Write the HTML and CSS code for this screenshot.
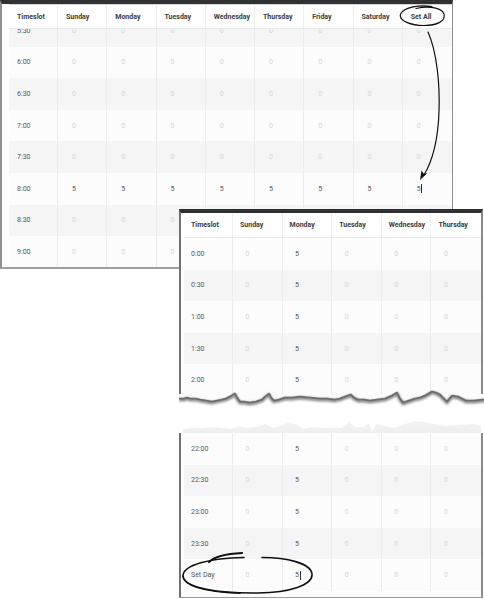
FILE: index.html
```html
<!DOCTYPE html>
<html>
<head>
<meta charset="utf-8">
<link rel="stylesheet" href="styles.css">
</head>
<body>
<div class="canvas">

  <div class="win win1">
    <div class="grid g9 head">
      <div class="hc">Timeslot</div><div class="hc">Sunday</div><div class="hc">Monday</div><div class="hc">Tuesday</div><div class="hc">Wednesday</div><div class="hc">Thursday</div><div class="hc">Friday</div><div class="hc">Saturday</div><div class="hc">Set All</div>
    </div>
    <div class="viewport">
      <div class="scroll">
        <div class="grid g9 row odd"><div class="t">5:30</div><div class="z">0</div><div class="z">0</div><div class="z">0</div><div class="z">0</div><div class="z">0</div><div class="z">0</div><div class="z">0</div><div class="z">0</div></div>
        <div class="grid g9 row"><div class="t">6:00</div><div class="z">0</div><div class="z">0</div><div class="z">0</div><div class="z">0</div><div class="z">0</div><div class="z">0</div><div class="z">0</div><div class="z">0</div></div>
        <div class="grid g9 row odd"><div class="t">6:30</div><div class="z">0</div><div class="z">0</div><div class="z">0</div><div class="z">0</div><div class="z">0</div><div class="z">0</div><div class="z">0</div><div class="z">0</div></div>
        <div class="grid g9 row"><div class="t">7:00</div><div class="z">0</div><div class="z">0</div><div class="z">0</div><div class="z">0</div><div class="z">0</div><div class="z">0</div><div class="z">0</div><div class="z">0</div></div>
        <div class="grid g9 row odd"><div class="t">7:30</div><div class="z">0</div><div class="z">0</div><div class="z">0</div><div class="z">0</div><div class="z">0</div><div class="z">0</div><div class="z">0</div><div class="z">0</div></div>
        <div class="grid g9 row"><div class="t">8:00</div><div class="v">5</div><div class="v">5</div><div class="v">5</div><div class="v">5</div><div class="v">5</div><div class="v">5</div><div class="v">5</div><div class="v">5<span class="caret"></span></div></div>
        <div class="grid g9 row odd"><div class="t">8:30</div><div class="z">0</div><div class="z">0</div><div class="z">0</div><div class="z">0</div><div class="z">0</div><div class="z">0</div><div class="z">0</div><div class="z">0</div></div>
        <div class="grid g9 row"><div class="t">9:00</div><div class="z">0</div><div class="z">0</div><div class="z">0</div><div class="z">0</div><div class="z">0</div><div class="z">0</div><div class="z">0</div><div class="z">0</div></div>
      </div>
    </div>
  </div>

  <div class="win win2">
    <div class="frag frag-top">
      <div class="grid g6 head">
        <div class="hc">Timeslot</div><div class="hc">Sunday</div><div class="hc">Monday</div><div class="hc">Tuesday</div><div class="hc">Wednesday</div><div class="hc">Thursday</div>
      </div>
      <div class="grid g6 row"><div class="t">0:00</div><div class="z">0</div><div class="v">5</div><div class="z">0</div><div class="z">0</div><div class="z">0</div></div>
      <div class="grid g6 row odd"><div class="t">0:30</div><div class="z">0</div><div class="v">5</div><div class="z">0</div><div class="z">0</div><div class="z">0</div></div>
      <div class="grid g6 row"><div class="t">1:00</div><div class="z">0</div><div class="v">5</div><div class="z">0</div><div class="z">0</div><div class="z">0</div></div>
      <div class="grid g6 row odd"><div class="t">1:30</div><div class="z">0</div><div class="v">5</div><div class="z">0</div><div class="z">0</div><div class="z">0</div></div>
      <div class="grid g6 row"><div class="t">2:00</div><div class="z">0</div><div class="v">5</div><div class="z">0</div><div class="z">0</div><div class="z">0</div></div>
      <svg class="tear" width="306" height="24" viewBox="0 0 306 24">
        <defs>
          <clipPath id="below396"><rect x="0" y="10" width="306" height="14"/></clipPath>
          <filter id="blur1" x="-5%" y="-50%" width="110%" height="200%"><feGaussianBlur stdDeviation="1.1"/></filter>
        </defs>
        <polygon clip-path="url(#below396)" fill="#fcfcfc" points="0,0 306,0 306,15 304,15 295,16 287,16 279,12 273,11 268,17 261,10 253,7 246,11 241,13 236,14 230,16 224,18 218,8 213,11 206,14 198,15 191,16 185,15 179,15 172,10 166,12 161,14 156,15 148,14 141,14 131,13 121,12 113,13 106,13 100,15 95,16 90,9 86,12 83,15 77,17 71,18 65,17 61,17 56,9 51,12 47,14 43,15 38,16 33,17 27,16 21,15 16,14 11,14 5,14 0,14"/>
        <polygon fill="#ffffff" points="0,14 5,14 11,14 16,14 21,15 27,16 33,17 38,16 43,15 47,14 51,12 56,9 61,17 65,17 71,18 77,17 83,15 86,12 90,9 95,16 100,15 106,13 113,13 121,12 131,13 141,14 148,14 156,15 161,14 166,12 172,10 179,15 185,15 191,16 198,15 206,14 213,11 218,8 224,18 230,16 236,14 241,13 246,11 253,7 261,10 268,17 273,11 279,12 287,16 295,16 304,15 306,15 306,24 0,24"/>
        <polyline filter="url(#blur1)" fill="none" stroke="#8a8a8a" stroke-width="3.2" stroke-linejoin="round" transform="translate(0,1.8)" points="0,14 5,14 8,13 11,14 16,14 21,15 27,16 33,17 38,16 43,15 47,14 51,12 56,9 58,13 61,17 65,17 71,18 77,17 83,15 86,12 90,9 92,13 95,16 100,15 106,13 113,13 121,12 131,13 141,14 148,14 156,15 161,14 166,12 172,10 175,13 179,15 185,15 191,16 198,15 206,14 213,11 218,8 221,14 224,18 230,16 236,14 241,13 246,11 253,7 257,8 261,10 265,14 268,17 273,11 279,12 283,14 287,16 295,16 304,15 306,15"/>
        <polyline fill="none" stroke="#6c6c6c" stroke-width="1.8" stroke-linejoin="round" transform="translate(0,0.6)" points="0,14 5,14 8,13 11,14 16,14 21,15 27,16 33,17 38,16 43,15 47,14 51,12 56,9 58,13 61,17 65,17 71,18 77,17 83,15 86,12 90,9 92,13 95,16 100,15 106,13 113,13 121,12 131,13 141,14 148,14 156,15 161,14 166,12 172,10 175,13 179,15 185,15 191,16 198,15 206,14 213,11 218,8 221,14 224,18 230,16 236,14 241,13 246,11 253,7 257,8 261,10 265,14 268,17 273,11 279,12 283,14 287,16 295,16 304,15 306,15"/>
      </svg>
    </div>

    <svg class="ghost" width="304" height="13" viewBox="0 0 304 13">
      <defs>
        <linearGradient id="gfade" x1="0" y1="0" x2="0" y2="1">
          <stop offset="0" stop-color="#f3f3f3"/>
          <stop offset="1" stop-color="#efefef"/>
        </linearGradient>
      </defs>
      <polygon fill="url(#gfade)" points="4,13 4,9 14,8 24,8 34,7 44,8 52,9 60,6 68,8 78,7 86,4 94,8 104,5 108,3 116,4 124,9 134,7 150,8 162,8 170,2 176,7 184,7 190,3 193,11 198,4 206,6 216,8 226,4 236,1 246,2 256,4 266,6 280,5 294,4 302,6 302,13"/>
    </svg>

    <div class="frag frag-bottom">
      <div class="grid g6 row"><div class="t">22:00</div><div class="z">0</div><div class="v">5</div><div class="z">0</div><div class="z">0</div><div class="z">0</div></div>
      <div class="grid g6 row odd"><div class="t">22:30</div><div class="z">0</div><div class="v">5</div><div class="z">0</div><div class="z">0</div><div class="z">0</div></div>
      <div class="grid g6 row"><div class="t">23:00</div><div class="z">0</div><div class="v">5</div><div class="z">0</div><div class="z">0</div><div class="z">0</div></div>
      <div class="grid g6 row odd"><div class="t">23:30</div><div class="z">0</div><div class="v">5</div><div class="z">0</div><div class="z">0</div><div class="z">0</div></div>
      <div class="grid g6 row"><div class="t">Set Day</div><div class="z">0</div><div class="v">5<span class="caret"></span></div><div class="z">0</div><div class="z">0</div><div class="z">0</div></div>
    </div>
  </div>

  <svg class="notes" width="484" height="599" viewBox="0 0 484 599">
    <path d="M432 6.5 C420 4.5, 404 7, 400.5 14 C398 21, 412 25.5, 424 25.5 C437 25.5, 446 21, 444 14 C442 8, 430 5.5, 416 8.5" fill="none" stroke="#111" stroke-width="1.2" stroke-linecap="round"/>
    <path d="M428 32 C437 52, 440 85, 439 112 C438 140, 433 160, 424 175" fill="none" stroke="#111" stroke-width="1.2" stroke-linecap="round"/>
    <polygon points="420,180 421.5,170.5 424,174 427.5,173" fill="#111"/>
    <path d="M242 553 C224 554, 214 557, 209 562" fill="none" stroke="#111" stroke-width="2.2" stroke-linecap="round"/>
    <path d="M244 557.5 C210 558, 183 565, 183 576 C183 588, 220 593.5, 258 593 C290 592.5, 313 585, 312 574 C311 563, 286 557.5, 262 557.5" fill="none" stroke="#111" stroke-width="1.6" stroke-linecap="round"/>
    <path d="M183 576 C184 586, 205 592, 240 593.2" fill="none" stroke="#111" stroke-width="1.4" stroke-linecap="round"/>
  </svg>

</div>
</body>
</html>
```

FILE: styles.css
```css
html, body {
  margin: 0;
  padding: 0;
  background: #ffffff;
}

body {
  font-family: Roboto, "Liberation Sans", Arial, sans-serif;
  font-size: 7px;
  color: #555555;
}

.canvas {
  position: relative;
  width: 484px;
  height: 599px;
  overflow: hidden;
}

/* windows on the canvas */
.win {
  position: absolute;
  background: #ffffff;
}

.win1 {
  left: 0;
  top: 0;
  width: 453px;
  box-sizing: border-box;
  border-top: 4px solid #2f3133;
  border-left: 2px solid #8f8f8f;
  border-right: 1px solid #8f8f8f;
  border-bottom: 2px solid #a0a0a0;
  padding: 0 0 0 7px;
  z-index: 1;
}

.win1 .head {
  border-top: 1px solid #d4d4d4;
  height: 25px;
}

.win2 {
  left: 179px;
  top: 209px;
  width: 304px;
  background: transparent;
  display: flex;
  flex-direction: column;
  z-index: 2;
}

.frag {
  box-sizing: border-box;
  background: #ffffff;
  border-left: 2px solid #707070;
  border-right: 2px solid #8a8a8a;
  padding-left: 3px;
}

.frag-top {
  position: relative;
  border-top: 4px solid #2e3032;
}

.frag-top .head {
  height: 25px;
}

.frag-bottom {
  padding-bottom: 6px;
  border-bottom: 1px solid #9a9a9a;
}

.tear {
  position: absolute;
  left: -2px;
  bottom: -12px;
  display: block;
}

.ghost {
  display: block;
  margin-top: 24px;
}

/* tables */
.grid {
  display: grid;
  box-sizing: border-box;
}

.g9 {
  width: 443px;
  grid-template-columns: 49px repeat(8, 1fr);
}

.g6 {
  width: 297px;
  grid-template-columns: 49px repeat(5, 1fr);
}

.head {
  background: #ffffff;
  border-bottom: 1px solid #e9eaec;
  position: relative;
  z-index: 2;
}

.hc {
  display: flex;
  align-items: center;
  padding-left: 8px;
  font-weight: 700;
  color: #3a3b3d;
  border-right: 1px solid #eceef1;
}

.g6 .hc {
  padding-left: 7px;
}

.hc:last-child {
  border-right: none;
}

.viewport {
  height: 238px;
  overflow: hidden;
}

.scroll {
  margin-top: -14px;
}

.row {
  height: 31.6px;
  background: #fcfcfc;
}

.row.odd {
  background: #f5f5f5;
}

.row > div {
  display: flex;
  align-items: center;
  border-right: 1px solid #eaecf0;
}

.row > div:last-child {
  border-right: none;
}

.t {
  padding-left: 8px;
  color: #585858;
}

.g6 .t {
  padding-left: 7px;
}

.z {
  padding-left: 14px;
  color: #d2d5db;
}

.v {
  padding-left: 14px;
  color: #4f5256;
}

.g6 .z,
.g6 .v {
  padding-left: 12.5px;
}

.caret {
  display: inline-block;
  width: 1px;
  height: 9px;
  background: #333333;
  margin-left: 0.5px;
}

/* annotations drawn over everything */
.notes {
  position: absolute;
  left: 0;
  top: 0;
  z-index: 10;
  pointer-events: none;
}
```
